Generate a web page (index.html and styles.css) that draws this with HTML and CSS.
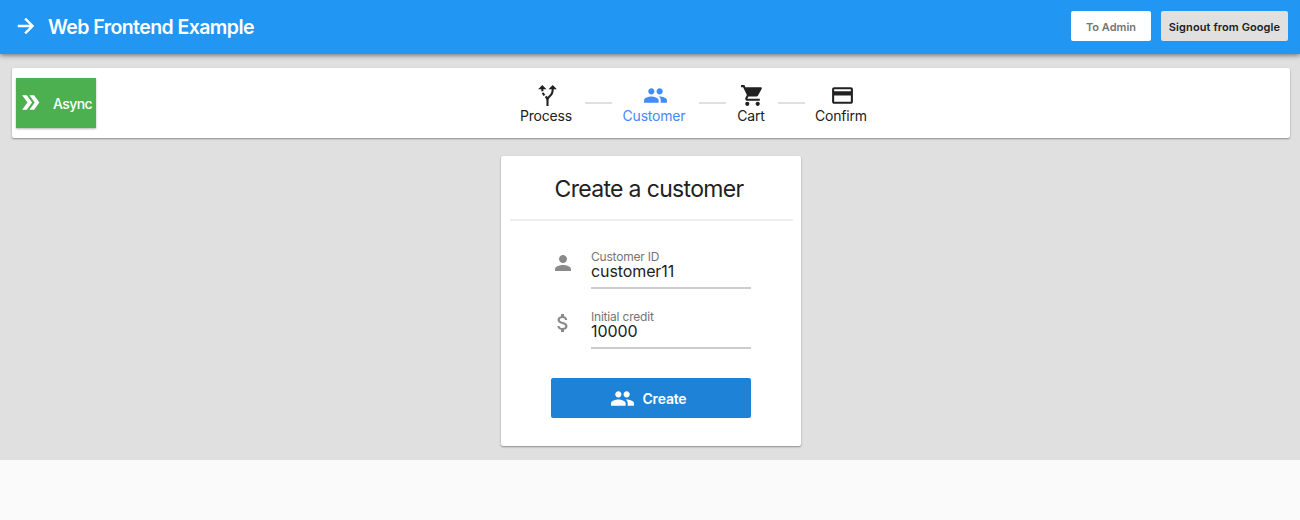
FILE: index.html
```html
<!DOCTYPE html>
<html lang="en">
<head>
<meta charset="utf-8">
<title>Web Frontend Example</title>
<link rel="stylesheet" href="styles.css">
</head>
<body>
<header class="appbar">
  <svg class="icon menu" viewBox="0 0 24 24"><path d="M12 4l-1.41 1.41L16.17 11H4v2h12.17l-5.58 5.59L12 20l8-8z"/></svg>
  <h1 class="brand">Web Frontend Example</h1>
  <button class="bar-btn admin">To Admin</button>
  <button class="bar-btn signout">Signout from Google</button>
</header>
<main class="content">
  <section class="paper toolbar">
    <button class="async"><svg class="icon" viewBox="0 0 24 24"><path d="M15.5 5H11l5 7-5 7h4.5l5-7zM8.5 5H4l5 7-5 7h4.5l5-7z"/></svg><span>Async</span></button>
    <nav class="steps">
      <div class="step process"><svg class="icon" viewBox="0 0 24 24"><path d="M9.78 11.16l-1.42 1.42c-.68-.69-1.34-1.58-1.79-2.94l1.94-.49c.32.89.77 1.5 1.27 2.01zM11 6L7 2 3 6h3.02c.02.81.08 1.54.19 2.17l1.94-.49C8.08 7.2 8.03 6.63 8.02 6H11zm10 0l-4-4-4 4h2.99c-.1 3.68-1.28 4.75-2.54 5.88-.5.44-1.01.92-1.45 1.55-.34-.49-.73-.88-1.13-1.24L9.46 13.6c.93.85 1.54 1.54 1.54 3.4v5h2v-5c0-2.02.71-2.66 1.79-3.63 1.38-1.24 3.08-2.78 3.2-7.37H21z"/></svg><span>Process</span></div>
      <i class="line first"></i>
      <div class="step customer"><svg class="icon" viewBox="0 0 24 24"><path d="M16 11c1.66 0 2.99-1.34 2.99-3S17.66 5 16 5s-3 1.34-3 3 1.34 3 3 3zm-8 0c1.66 0 2.99-1.34 2.99-3S9.66 5 8 5 5 6.34 5 8s1.34 3 3 3zm0 2c-2.33 0-7 1.17-7 3.5V19h14v-2.500c0-2.33-4.67-3.5-7-3.5zm8 0c-.29 0-.62.02-.97.05 1.16.84 1.97 1.97 1.97 3.45V19h6v-2.500c0-2.33-4.67-3.5-7-3.5z"/></svg><span>Customer</span></div>
      <i class="line second"></i>
      <div class="step cart"><svg class="icon" viewBox="0 0 24 24"><path d="M7 18c-1.1 0-1.99.9-1.99 2S5.900 22 7 22s2-.9 2-2-.9-2-2-2zM1 2v2h2l3.6 7.59-1.35 2.45c-.16.28-.25.61-.25.96 0 1.1.9 2 2 2h12v-2H7.420c-.14 0-.25-.11-.25-.25l.03-.12.9-1.63h7.450c.75 0 1.410-.41 1.750-1.030l3.580-6.490c.08-.14.12-.31.12-.48 0-.55-.45-1-1-1H5.210l-.94-2H1zm16 16c-1.100 0-1.990.9-1.990 2s.89 2 1.990 2 2-.9 2-2-.9-2-2-2z"/></svg><span>Cart</span></div>
      <i class="line third"></i>
      <div class="step confirm"><svg class="icon" viewBox="0 0 24 24"><path d="M20 4H4c-1.110 0-1.990.89-1.990 2L2 18c0 1.110.89 2 2 2h16c1.110 0 2-.89 2-2V6c0-1.110-.89-2-2-2zm0 14H4v-6h16v6zm0-10H4V6h16v2z"/></svg><span>Confirm</span></div>
    </nav>
  </section>
  <section class="paper card">
    <h2 class="title">Create a customer</h2>
    <div class="divider"></div>
    <form class="form">
      <div class="row">
        <svg class="icon" viewBox="0 0 24 24"><path d="M12 12c2.210 0 4-1.790 4-4s-1.790-4-4-4-4 1.790-4 4 1.790 4 4 4zm0 2c-2.670 0-8 1.340-8 4v2h16v-2c0-2.660-5.330-4-8-4z"/></svg>
        <label class="field"><span class="label id">Customer ID</span><span class="value name">customer11</span></label>
      </div>
      <div class="row">
        <svg class="icon" viewBox="0 0 24 24"><path d="M11.8 10.9c-2.270-.59-3-1.200-3-2.150 0-1.090 1.010-1.850 2.700-1.850 1.780 0 2.440.85 2.500 2.100h2.210c-.07-1.720-1.120-3.300-3.210-3.810V3h-3v2.160c-1.940.42-3.500 1.680-3.500 3.610 0 2.310 1.910 3.460 4.700 4.130 2.500.6 3 1.480 3 2.410 0 .69-.49 1.790-2.700 1.790-2.060 0-2.870-.92-2.980-2.100h-2.200c.12 2.190 1.760 3.420 3.680 3.830V21h3v-2.150c1.950-.37 3.500-1.500 3.500-3.550 0-2.840-2.430-3.810-4.700-4.400z"/></svg>
        <label class="field"><span class="label credit">Initial credit</span><span class="value amount">10000</span></label>
      </div>
      <button class="create" type="button"><svg class="icon" viewBox="0 0 24 24"><path d="M16 11c1.660 0 2.990-1.340 2.990-3S17.660 5 16 5s-3 1.340-3 3 1.340 3 3 3zm-8 0c1.660 0 2.990-1.340 2.990-3S9.660 5 8 5 5 6.340 5 8s1.340 3 3 3zm0 2c-2.330 0-7 1.170-7 3.500V19h14v-2.500c0-2.330-4.670-3.500-7-3.500zm8 0c-.29 0-.62.02-.97.05 1.160.84 1.970 1.970 1.970 3.450V19h6v-2.500c0-2.330-4.670-3.500-7-3.500z"/></svg><span>Create</span></button>
    </form>
  </section>
</main>
</body>
</html>
```
FILE: styles.css
```css
* { box-sizing: border-box; }
body { margin: 0; background: #fafafa; color: #212121; font-family: Inter, "Liberation Sans", sans-serif; }
h1, h2 { margin: 0; }
button { border: 0; padding: 0; margin: 0; font-family: inherit; white-space: nowrap; }
.icon { display: block; flex: none; width: 25px; height: 25px; fill: currentColor; }
.appbar { position: relative; display: flex; align-items: flex-start; height: 54px; padding: 11px 12px 0 14px; background: #2196f3; color: #fff; box-shadow: 0 1px 6px rgba(0,0,0,.4), 0 1px 4px rgba(0,0,0,.2); }
.menu { width: 24px; height: 24px; margin-top: 3px; stroke: currentColor; stroke-width: .5px; }
.brand { flex: 1; margin: 1px 0 0 10px; font-size: 19.5px; line-height: 30px; font-weight: 600; letter-spacing: -.57px; white-space: nowrap; }
.bar-btn { height: 30px; border-radius: 2px; font-size: 11px; line-height: 32px; font-weight: 600; }
.admin { width: 80px; background: #fff; color: #757575; }
.signout { width: 127px; margin-left: 10px; background: #e0e0e0; color: #212121; letter-spacing: .1px; }
.content { height: 406px; padding: 14px 10px 0 12px; background: #e0e0e0; }
.paper { background: #fff; border-radius: 2px; box-shadow: 0 1px 2px rgba(0,0,0,.38); }
.toolbar { display: flex; height: 70px; padding: 10px 4px; }
.async { display: flex; width: 80px; height: 50px; padding: 12px 0 0 2px; background: #4caf50; color: #fff; font-size: 14px; font-weight: 500; line-height: 28px; box-shadow: 0 1px 2px rgba(0,0,0,.3); }
.async span { margin-left: 10px; letter-spacing: -.6px; }
.steps { display: flex; margin-left: 424px; padding-top: 4px; font-size: 14px; letter-spacing: -.2px; }
.step { display: flex; flex-direction: column; align-items: center; flex: none; padding-top: .5px; line-height: 18px; white-space: nowrap; }
.step span { margin-top: -.5px; }
.process { width: 52px; }
.process .icon { margin-left: 3px; }
.customer { width: 64px; color: #448aff; }
.customer .icon { margin-left: 3px; }
.cart { width: 28px; }
.cart .icon { margin-left: 2px; }
.confirm { width: 52px; }
.confirm .icon { margin-left: 3px; }
.line { flex: none; width: 27px; height: 2px; margin-top: 20px; background: #e0e0e0; }
.first { margin-left: 13px; margin-right: 10px; }
.second { margin-left: 13px; margin-right: 11px; }
.third { margin-left: 13px; margin-right: 10px; }
.card { width: 300px; height: 290px; margin: 18px 0 0 489px; padding: 0 8px; }
.title { height: 63px; padding: 17px 4px 0 0; text-align: center; font-size: 23px; line-height: 32px; font-weight: 400; letter-spacing: -.67px; white-space: nowrap; }
.divider { height: 2px; background: #eee; margin-left: 1px; }
.form { padding: 29px 42px 0; }
.row { display: flex; height: 60px; color: #8a8a8a; }
.row .icon { width: 24px; height: 24px; margin-top: 1px; }
.field { display: flex; flex-direction: column; width: 160px; height: 39px; margin-left: 16px; border-bottom: 2px solid #ccc; }
.label { color: #757575; font-size: 12px; line-height: 14px; letter-spacing: -.2px; }
.value { color: #212121; font-size: 16px; line-height: 16px; margin-top: -1px; letter-spacing: -.1px; }
.create { display: flex; width: 200px; height: 40px; margin-top: 8px; padding: 7.5px 0 0 59px; border-radius: 2px; background: #1e82d6; color: #fff; font-size: 14px; line-height: 28px; font-weight: 600; }
.create span { margin: -.5px 0 0 7.5px; letter-spacing: -.2px; }
```
